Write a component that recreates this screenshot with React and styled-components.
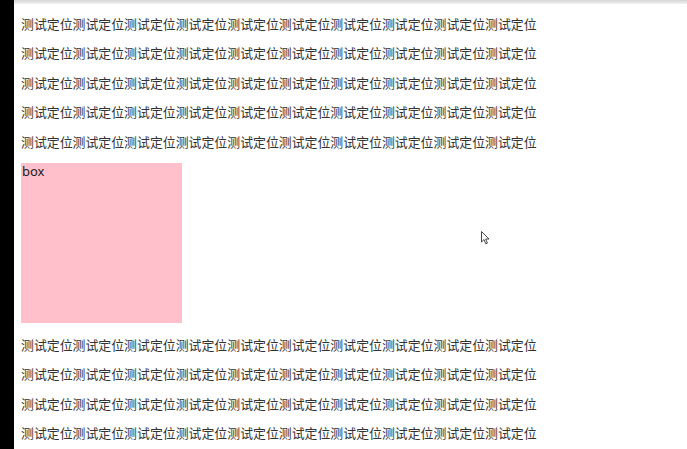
import React from "react"
import styled, { createGlobalStyle } from "styled-components"

const GlobalStyle = createGlobalStyle`
    html, body {
        margin: 0;
        padding: 0;
        background: #ffffff;
    }
`

const Frame = styled.div`
    display: flex;
    width: 687px;
    height: 449px;
    overflow: hidden;
    position: relative;
`

const Strip = styled.div`
    width: 14px;
    flex-shrink: 0;
    background: #000000;
`

const Screen = styled.div`
    flex: 1;
    display: flex;
    flex-direction: column;
    background: #ffffff;
`

const TopBar = styled.div`
    height: 4px;
    flex-shrink: 0;
    background: linear-gradient(#d4d4d4, #f2f2f2);
`

const Content = styled.div`
    padding: 0 0 0 7px;
    display: flow-root;
`

const Line = styled.p`
    margin: 12.5px 0;
    font-family: "Noto Sans CJK SC", "Microsoft YaHei", sans-serif;
    font-size: 12.9px;
    line-height: 17px;
    color: #333333;
    white-space: nowrap;

    &:first-child {
        margin-top: 10.5px;
    }
`

const Box = styled.div`
    width: 161px;
    height: 160px;
    margin: 13px 0;
    background: #ffc0cb;
    font-family: "Noto Sans", "Open Sans", sans-serif;
    font-size: 13px;
    line-height: 17px;
    color: #1a1a1a;
    padding-left: 1px;
    box-sizing: border-box;
`

const Cursor = styled.svg`
    position: absolute;
    left: 481px;
    top: 231px;
`

const text = "测试定位".repeat(10)

const App = () => {
    return (
        <>
            <GlobalStyle />
            <Frame>
                <Strip />
                <Screen>
                    <TopBar />
                    <Content>
                        {[0, 1, 2, 3, 4].map(i => <Line key={i}>{text}</Line>)}
                        <Box>box</Box>
                        {[0, 1, 2, 3].map(i => <Line key={i}>{text}</Line>)}
                    </Content>
                </Screen>
                <Cursor width="10" height="14" viewBox="0 0 10 14">
                    <path d="M0.5 0.5 L0.5 11 L3 8.6 L4.8 12.8 L6.4 12.1 L4.7 8 L8 8 Z" fill="#fff" stroke="#333" strokeWidth="0.9" />
                </Cursor>
            </Frame>
        </>
    )
}

export default App
